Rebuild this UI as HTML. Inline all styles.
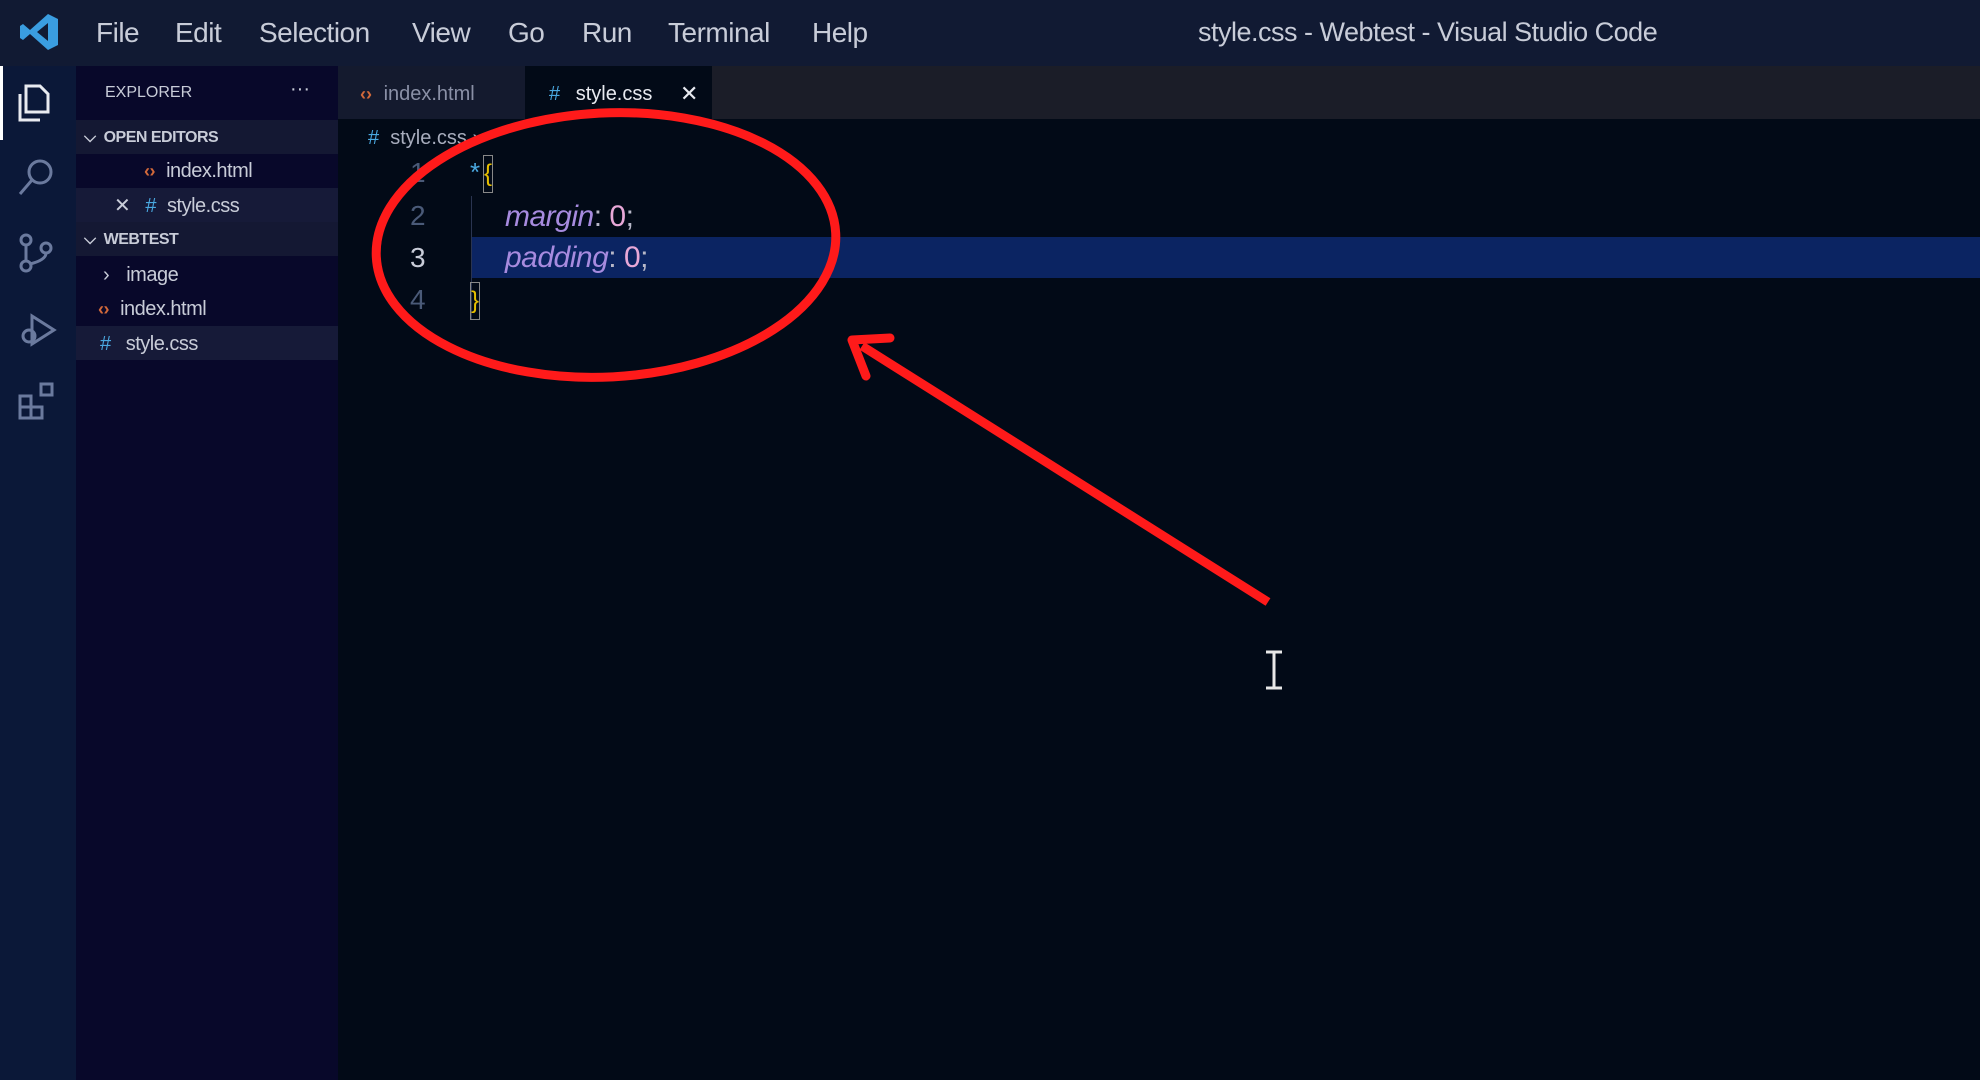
<!DOCTYPE html>
<html><head><meta charset="utf-8"><style>
*{margin:0;padding:0;box-sizing:border-box}
body{width:1980px;height:1080px;overflow:hidden;background:#020a17;font-family:"Liberation Sans",sans-serif;position:relative;color:#c9ccd6}
.abs{position:absolute}
#title{left:0;top:0;width:1980px;height:66px;background:#111a33}
.menu{top:17px;font-size:28px;color:#c8ccd8;letter-spacing:-0.5px}
#act{left:0;top:66px;width:76px;height:1014px;background:#0b1838}
#side{left:76px;top:66px;width:262px;height:1014px;background:#08082a}
#tabs{left:338px;top:66px;width:1642px;height:53px;background:#1b1d28}
.row{position:absolute;left:76px;width:262px;height:34px;font-size:20px;color:#c8ccd8;line-height:36px;letter-spacing:-0.5px}
.ic{color:#d2693a;font-size:18px;font-weight:bold}
.ln{position:absolute;left:410px;font-size:28px;color:#4a5a78;font-style:normal}
.code{position:absolute;font-size:30px;font-style:italic;color:#a78bdf;letter-spacing:-0.5px}
</style></head><body>
<div id="title" class="abs"></div>
<svg class="abs" style="left:18px;top:12px" width="44" height="40" viewBox="0 0 44 40"><path d="M30 2 L40 7 V33 L30 38 L12 22 L5 28 L2 26 V14 L5 12 L12 18 Z M30 11 L19 20 L30 29 Z" fill="#3a9de0"/></svg>
<div class="abs menu" style="left:96px">File</div>
<div class="abs menu" style="left:175px">Edit</div>
<div class="abs menu" style="left:259px">Selection</div>
<div class="abs menu" style="left:412px">View</div>
<div class="abs menu" style="left:508px">Go</div>
<div class="abs menu" style="left:582px">Run</div>
<div class="abs menu" style="left:668px">Terminal</div>
<div class="abs menu" style="left:812px">Help</div>
<div class="abs menu" style="left:1198px;font-size:27px">style.css - Webtest - Visual Studio Code</div>

<div id="act" class="abs"></div>
<div class="abs" style="left:0;top:66px;width:3px;height:74px;background:#fff"></div>
<svg class="abs" style="left:12px;top:78px" width="50" height="390" viewBox="0 0 50 390" fill="none" stroke-width="3">
<g stroke="#e8eaf0"><path d="M14 8 H28 L36 16 V34 H14 Z"/><path d="M8 16 V42 H28"/></g>
<g stroke="#6b7a9e">
<circle cx="28" cy="94" r="11"/><path d="M20 102 L8 116"/>
<circle cx="14" cy="162" r="5"/><circle cx="14" cy="188" r="5"/><circle cx="34" cy="170" r="5"/><path d="M14 167 V183 M34 175 Q34 182 18 186"/>
<path d="M20 238 L42 252 L20 266 Z"/><circle cx="17" cy="258" r="6"/>
<rect x="8" y="318" width="11" height="11"/><rect x="8" y="329" width="11" height="11"/><rect x="19" y="329" width="11" height="11"/><rect x="29" y="306" width="11" height="11"/>
</g></svg>

<div id="side" class="abs"></div>
<div class="abs" style="left:105px;top:84px;font-size:16px;color:#c8ccd8">EXPLORER</div>
<div class="abs" style="left:290px;top:78px;font-size:20px;color:#c8ccd8">···</div>
<div class="row" style="top:120px;background:#141833;font-weight:bold;font-size:16px"><span style="margin-left:8px">⌵</span> <span style="margin-left:4px">OPEN EDITORS</span></div>
<div class="row" style="top:153px"><span class="ic" style="margin-left:68px">‹›</span> <span style="margin-left:6px">index.html</span></div>
<div class="row" style="top:188px;background:#161a38"><span style="margin-left:38px">✕</span> <span style="margin-left:10px;color:#4aa8e0">#</span> <span style="margin-left:6px">style.css</span></div>
<div class="row" style="top:222px;background:#141833;font-weight:bold;font-size:16px"><span style="margin-left:8px">⌵</span> <span style="margin-left:4px">WEBTEST</span></div>
<div class="row" style="top:257px"><span style="margin-left:27px">›</span> <span style="margin-left:12px">image</span></div>
<div class="row" style="top:291px"><span class="ic" style="margin-left:22px">‹›</span> <span style="margin-left:6px">index.html</span></div>
<div class="row" style="top:326px;background:#161a38"><span style="margin-left:24px;color:#4aa8e0">#</span> <span style="margin-left:10px">style.css</span></div>

<div id="tabs" class="abs"></div>
<div class="abs" style="left:338px;top:66px;width:187px;height:53px;background:#141a2e;font-size:20px;line-height:56px;color:#8a90a6"><span class="ic" style="margin-left:22px">‹›</span> <span style="margin-left:6px">index.html</span></div>
<div class="abs" style="left:525px;top:66px;width:187px;height:53px;background:#020a17;font-size:20px;line-height:56px;color:#e8eaf0"><span style="margin-left:24px;color:#4aa8e0">#</span> <span style="margin-left:10px">style.css</span><span style="position:absolute;left:155px;font-size:22px">✕</span></div>
<div class="abs" style="left:368px;top:127px;font-size:20px;color:#a8adbd"><span style="color:#4aa8e0">#</span>&nbsp;&nbsp;style.css ›</div>

<div class="abs" style="left:471px;top:237px;width:1509px;height:41px;background:#0b2462"></div>
<div class="abs" style="left:471px;top:196px;width:1px;height:124px;background:#2a3450"></div>
<div class="ln" style="top:157px">1</div>
<div class="ln" style="top:200px">2</div>
<div class="ln" style="top:242px;color:#c8ccd8">3</div>
<div class="ln" style="top:284px">4</div>
<div class="abs" style="left:470px;top:157px;font-size:26px;color:#4aa8e0">*</div>
<div class="abs" style="left:483px;top:155px;width:10px;height:38px;border:1px solid #888;color:#e8c000;font-size:24px;line-height:36px">{</div>
<div class="code" style="left:505px;top:200px">margin<span style="color:#b8b8c8;font-style:normal">: </span><span style="color:#e8a8d8;font-style:normal">0</span><span style="color:#b8b8c8;font-style:normal">;</span></div>
<div class="code" style="left:505px;top:241px">padding<span style="color:#b8b8c8;font-style:normal">: </span><span style="color:#e8a8d8;font-style:normal">0</span><span style="color:#b8b8c8;font-style:normal">;</span></div>
<div class="abs" style="left:470px;top:282px;width:10px;height:38px;border:1px solid #888;color:#e8c000;font-size:24px;line-height:36px">}</div>

<svg class="abs" style="left:0;top:0" width="1980" height="1080">
<ellipse cx="606" cy="245" rx="230" ry="132" fill="none" stroke="#ff1a1a" stroke-width="9" transform="rotate(-3 606 245)"/>
<path d="M1268 602 L862 346" stroke="#ff1a1a" stroke-width="9" fill="none"/>
<path d="M852 340 L890 338 M852 340 L866 376" stroke="#ff1a1a" stroke-width="9" stroke-linecap="round"/>
<path d="M1266 652 H1282 M1274 652 V688 M1266 688 H1282" stroke="#e8e8e8" stroke-width="3"/>
</svg>
</body></html>
